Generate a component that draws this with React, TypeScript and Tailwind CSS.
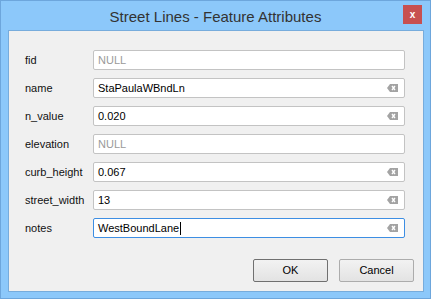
const fields: { label: string; value: string; empty?: boolean; focused?: boolean }[] = [
  { label: "fid", value: "NULL", empty: true },
  { label: "name", value: "StaPaulaWBndLn" },
  { label: "n_value", value: "0.020" },
  { label: "elevation", value: "NULL", empty: true },
  { label: "curb_height", value: "0.067" },
  { label: "street_width", value: "13" },
  { label: "notes", value: "WestBoundLane", focused: true },
];

function ClearIcon() {
  return (
    <svg width="11" height="8" viewBox="0 0 11 8" className="shrink-0">
      <path d="M3 0H11V8H3L0 4Z" fill="#a3a3a3" />
      <path d="M5 2L8 6M8 2L5 6" stroke="#fff" strokeWidth="1.3" />
    </svg>
  );
}

function Field({ label, value, empty, focused }: (typeof fields)[number]) {
  return (
    <div className="flex items-center h-5">
      <div className="w-[68px] text-[11px] text-[#111]">{label}</div>
      <div
        className={
          "flex-1 h-5 flex items-center pl-1 pr-[6px] rounded-[2px] bg-white border " +
          (focused ? "border-[#3d8ee3]" : "border-[#c3c3c3]")
        }
      >
        <span className={"flex-1 flex items-center text-[11px] " + (empty ? "text-[#9a9a9a]" : "text-black")}>
          {value}
          {focused && <span className="inline-block w-px h-[13px] bg-black ml-px" />}
        </span>
        {!empty && <ClearIcon />}
      </div>
    </div>
  );
}

export default function App() {
  return (
    <div
      className="w-[431px] h-[299px] bg-[#8cc8fa] border border-[#6da6dc] flex flex-col"
      style={{ fontFamily: '"Liberation Sans", Arial, sans-serif' }}
    >
      <div className="relative h-[29px] shrink-0 flex items-center justify-center">
        <span className="text-[15px] text-[#333] mt-[3px]">Street Lines - Feature Attributes</span>
        <div className="absolute left-[402px] top-[4px] w-[19px] h-[19px] bg-[#c75050] flex items-center justify-center">
          <span className="text-white text-[10px] font-bold leading-none">x</span>
        </div>
      </div>
      <div className="ml-[7px] mr-[6px] mb-[6px] flex-1 bg-[#f0f0f0] border border-[#77acdc] flex flex-col pl-[16px] pr-[18px] pt-[19px]">
        <div className="flex flex-col gap-2">
          {fields.map((f) => (
            <Field key={f.label} {...f} />
          ))}
        </div>
        <div className="flex justify-end gap-[11px] mt-[21px] -mr-[9px]">
          {["OK", "Cancel"].map((b, i) => (
            <div
              key={b}
              className={
                "w-[75px] h-[23px] flex items-center justify-center text-[11px] text-black rounded-[2px] bg-gradient-to-b from-[#f2f2f2] to-[#e3e3e3] border " +
                (i === 0 ? "border-[#707070]" : "border-[#acacac]")
              }
            >
              {b}
            </div>
          ))}
        </div>
      </div>
    </div>
  );
}
